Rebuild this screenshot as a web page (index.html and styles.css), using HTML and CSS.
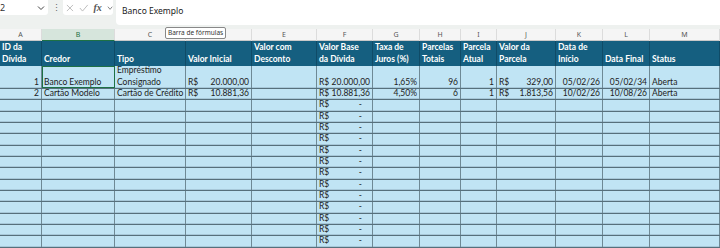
FILE: index.html
```html
<!DOCTYPE html>
<html lang="pt-BR">
<head>
    <meta charset="UTF-8">
    <meta name="viewport" content="width=device-width, initial-scale=1.0">
    <title>Controle de Dívidas</title>
    <link rel="stylesheet" href="styles.css">
</head>
<body>
    <!-- Formula bar -->
    <div class="formula-area">
        <div class="name-box">
            <span>2</span>
            <svg class="chev" width="8" height="6" viewBox="0 0 8 6"><path d="M1 1.5 L4 4.5 L7 1.5" fill="none" stroke="#444" stroke-width="1"/></svg>
        </div>
        <div class="dots">&#8942;</div>
        <div class="fx-box">
            <svg width="9" height="10" viewBox="0 0 9 10"><path d="M1 1.5 L8 8.5 M8 1.5 L1 8.5" stroke="#b5b5b5" stroke-width="1"/></svg>
            <svg width="11" height="10" viewBox="0 0 11 10"><path d="M1 5 L4 8.5 L10 1.5" fill="none" stroke="#b5b5b5" stroke-width="1"/></svg>
            <span class="fx">fx</span>
            <svg class="chev" width="7" height="6" viewBox="0 0 7 6"><path d="M1 1.5 L3.5 4.5 L6 1.5" fill="none" stroke="#777" stroke-width="1"/></svg>
        </div>
        <div class="formula-input">Banco Exemplo</div>
        <div class="tooltip">Barra de fórmulas</div>
    </div>

    <!-- Sheet -->
    <div class="sheet">
        <div class="row col-heads">
            <div>A</div><div class="active">B</div><div>C</div><div>D</div><div>E</div><div>F</div><div>G</div>
            <div>H</div><div>I</div><div>J</div><div>K</div><div>L</div><div>M</div>
        </div>

        <div class="row head">
            <div>ID da<br>Dívida</div>
            <div>Credor</div>
            <div>Tipo</div>
            <div>Valor Inicial</div>
            <div>Valor com<br>Desconto</div>
            <div>Valor Base<br>da Dívida</div>
            <div>Taxa de<br>Juros (%)</div>
            <div>Parcelas<br>Totais</div>
            <div>Parcela<br>Atual</div>
            <div>Valor da<br>Parcela</div>
            <div>Data de<br>Início</div>
            <div>Data Final</div>
            <div>Status</div>
        </div>

        <div class="row data tall">
            <div class="num">1</div>
            <div class="selected">Banco Exemplo</div>
            <div>Empréstimo<br>Consignado</div>
            <div class="money"><span>R$</span><span>20.000,00</span></div>
            <div></div>
            <div class="money"><span>R$</span><span>20.000,00</span></div>
            <div class="num">1,65%</div>
            <div class="num">96</div>
            <div class="num">1</div>
            <div class="money"><span>R$</span><span>329,00</span></div>
            <div class="num">05/02/26</div>
            <div class="num">05/02/34</div>
            <div>Aberta</div>
        </div>

        <div class="row data">
            <div class="num">2</div>
            <div>Cartão Modelo</div>
            <div>Cartão de Crédito</div>
            <div class="money"><span>R$</span><span>10.881,36</span></div>
            <div></div>
            <div class="money"><span>R$</span><span>10.881,36</span></div>
            <div class="num">4,50%</div>
            <div class="num">6</div>
            <div class="num">1</div>
            <div class="money"><span>R$</span><span>1.813,56</span></div>
            <div class="num">10/02/26</div>
            <div class="num">10/08/26</div>
            <div>Aberta</div>
        </div>

        <div id="empty-rows"></div>
    </div>

    <script>
        // Empty rows only carry the R$ - formula in column F
        const emptyRows = document.getElementById('empty-rows');
        for (let i = 0; i < 13; i++) {
            const row = document.createElement('div');
            row.className = 'row data';
            for (let c = 0; c < 13; c++) {
                const cell = document.createElement('div');
                if (c === 5) {
                    cell.className = 'money';
                    cell.innerHTML = '<span>R$</span><span class="dash">-</span>';
                }
                row.appendChild(cell);
            }
            emptyRows.appendChild(row);
        }
    </script>
</body>
</html>
```

FILE: styles.css
```css
body {
    margin: 0;
    width: 720px;
    height: 248px;
    overflow: hidden;
    background-color: #eef1ef;
    font-family: Lato, "Liberation Sans", sans-serif;
    color: #222;
}

/* Formula bar */
.formula-area {
    position: relative;
    display: flex;
    align-items: flex-start;
    height: 29px;
    background-color: #eef1ef;
}

.name-box {
    display: flex;
    align-items: center;
    justify-content: space-between;
    width: 48px;
    height: 15px;
    padding: 0 3px 0 0;
    box-sizing: border-box;
    background-color: #fff;
    border-radius: 0 0 3px 0;
    font-family: "Noto Sans", sans-serif;
    font-size: 9px;
    color: #333;
}

.dots {
    width: 10px;
    margin-left: 3px;
    font-size: 9px;
    line-height: 15px;
    color: #666;
    text-align: center;
}

.fx-box {
    display: flex;
    align-items: center;
    gap: 5px;
    width: 50px;
    height: 15px;
    margin-left: 2px;
    padding-left: 3px;
    box-sizing: border-box;
    background-color: #fff;
    border-radius: 0 0 3px 3px;
}

.fx {
    font-family: "Liberation Serif", serif;
    font-style: italic;
    font-weight: bold;
    font-size: 10px;
    color: #555;
}

.formula-input {
    flex: 1;
    height: 25px;
    margin-left: 3px;
    padding: 5px 0 0 6px;
    box-sizing: border-box;
    background-color: #fff;
    border-radius: 0 0 0 4px;
    font-family: "Noto Sans", sans-serif;
    font-size: 8.5px;
    color: #222;
}

.tooltip {
    position: absolute;
    left: 165px;
    top: 27px;
    z-index: 2;
    padding: 1px 2px;
    background-color: #fff;
    border: 1px solid #888;
    border-radius: 2px;
    font-family: "Noto Sans", sans-serif;
    font-size: 6.5px;
    line-height: 8px;
    color: #333;
}

/* Sheet grid */
.sheet {
    background-color: #c0e4f4;
}

.row {
    display: grid;
    grid-template-columns: 42px 73px 71px 66px 65px 56px 47px 41px 36px 59px 47px 47px 70px;
}

.col-heads {
    height: 12px;
    background-color: #f5f5f5;
    border-bottom: 1px solid #c9c9c9;
    box-sizing: border-box;
}

.col-heads div {
    border-right: 1px solid #dcdcdc;
    font-family: "Noto Sans", sans-serif;
    font-size: 7px;
    line-height: 11px;
    color: #555;
    text-align: center;
}

.col-heads .active {
    background-color: #d6e5dc;
    color: #1e7145;
    border-bottom: 1px solid #1e7145;
}

.head {
    height: 25px;
    background-color: #155f80;
}

.head div {
    display: flex;
    align-items: flex-end;
    padding: 0 2px 1px 2px;
    border-right: 1px solid #0f4b67;
    font-weight: bold;
    font-size: 8.5px;
    line-height: 11.5px;
    color: #fff;
}

.data {
    height: 11.33px;
    box-sizing: border-box;
    border-bottom: 1px solid #56707c;
}

.data.tall {
    height: 23px;
}

.data div {
    display: flex;
    align-items: flex-end;
    padding: 0 2px;
    border-right: 1px solid #6e8995;
    box-shadow: inset 0 -1px 0 rgba(120, 150, 165, 0.35);
    font-size: 8.5px;
    line-height: 11.3px;
    color: #222;
    white-space: nowrap;
    overflow: hidden;
}

.data .num {
    justify-content: flex-end;
}

.data .money {
    justify-content: space-between;
}

.data .dash {
    padding-right: 8px;
}

.data .selected {
    outline: 1px solid #1e7145;
    outline-offset: -1px;
}
```
